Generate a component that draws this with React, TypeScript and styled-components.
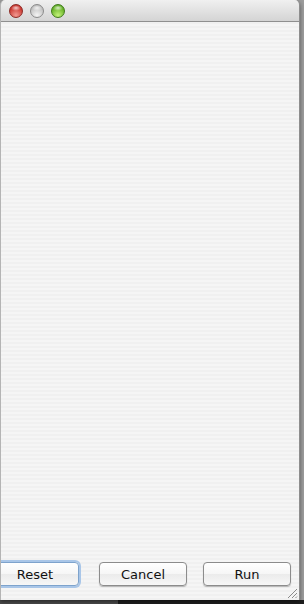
import React from "react";
import styled, { createGlobalStyle } from "styled-components";

const Global = createGlobalStyle`
  html, body {
    margin: 0;
    padding: 0;
    width: 304px;
    height: 604px;
    overflow: hidden;
  }
  body {
    font-family: "DejaVu Sans", "Liberation Sans", sans-serif;
    background:
      linear-gradient(to right, #4c4c4c 0 118px, #1e1e1e 118px) bottom / 100% 4px no-repeat,
      #9c9c9c;
  }
`;

const Desktop = styled.div`
  width: 304px;
  height: 604px;
  display: flex;
  align-items: flex-start;
`;

const Window = styled.div`
  width: 300px;
  height: 600px;
  display: flex;
  flex-direction: column;
  border-radius: 5px 5px 0 0;
  border-right: 1px solid #8e8e8e;
  border-left: 1px solid #b4b4b4;
  box-sizing: border-box;
  overflow: hidden;
  position: relative;
  box-shadow: 0 2px 4px rgba(0, 0, 0, 0.45);
`;

const TitleBar = styled.div`
  height: 22px;
  flex: none;
  display: flex;
  align-items: center;
  gap: 7px;
  padding-left: 8px;
  box-sizing: border-box;
  background: linear-gradient(#f0f0f0, #d4d4d4);
  border-bottom: 1px solid #8f8f8f;
`;

const Light = styled.span<{ $c1: string; $c2: string; $edge: string }>`
  width: 14px;
  height: 14px;
  border-radius: 50%;
  box-sizing: border-box;
  border: 1px solid ${(p) => p.$edge};
  background:
    radial-gradient(ellipse 5px 3px at 50% 24%, rgba(255, 255, 255, 0.75), transparent),
    radial-gradient(circle at 50% 85%, ${(p) => p.$c1} 0, ${(p) => p.$c2} 80%);
`;

const Content = styled.div`
  flex: 1;
  display: flex;
  flex-direction: column;
  justify-content: flex-end;
  background: repeating-linear-gradient(#f0f0f0 0 2px, #f5f5f5 2px 4px);
`;

const Footer = styled.div`
  height: 38px;
  display: flex;
  align-items: flex-start;
  margin-left: -10px;
  gap: 20px;
  position: relative;
`;

const Group = styled.div`
  display: flex;
  gap: 16px;
`;

const Button = styled.button<{ $focus?: boolean }>`
  width: 88px;
  height: 24px;
  padding: 0;
  font-family: "DejaVu Sans", "Liberation Sans", sans-serif;
  font-size: 13px;
  color: #111;
  border-radius: 4px;
  border: 1px solid ${(p) => (p.$focus ? "#7ea3cc" : "#8c8c8c")};
  background: linear-gradient(#ffffff 0%, #f6f6f6 50%, #ebebeb 51%, #f7f7f7 100%);
  box-shadow: ${(p) =>
    p.$focus
      ? "0 0 0 2px #a9c6e8, 0 1px 1px rgba(0,0,0,0.2)"
      : "0 1px 1px rgba(0,0,0,0.25)"};
`;

const Grip = styled.svg`
  position: absolute;
  right: 1px;
  bottom: 1px;
`;

export default function App() {
  return (
    <>
      <Global />
      <Desktop>
        <Window>
          <TitleBar>
            <Light $c1="#f29a92" $c2="#c4261f" $edge="#8c2a25" />
            <Light $c1="#f4f4f4" $c2="#b8b8b8" $edge="#8a8a8a" />
            <Light $c1="#c4f27a" $c2="#54a616" $edge="#3f7a1a" />
          </TitleBar>
          <Content>
            <Footer>
              <Button $focus>Reset</Button>
              <Group>
                <Button>Cancel</Button>
                <Button>Run</Button>
              </Group>
            </Footer>
          </Content>
          <Grip width="12" height="12" viewBox="0 0 12 12">
            <path d="M11 2 L2 11 M11 6 L6 11 M11 9.5 L9.5 11" stroke="#8a8a8a" strokeWidth="1" />
          </Grip>
        </Window>
      </Desktop>
    </>
  );
}
